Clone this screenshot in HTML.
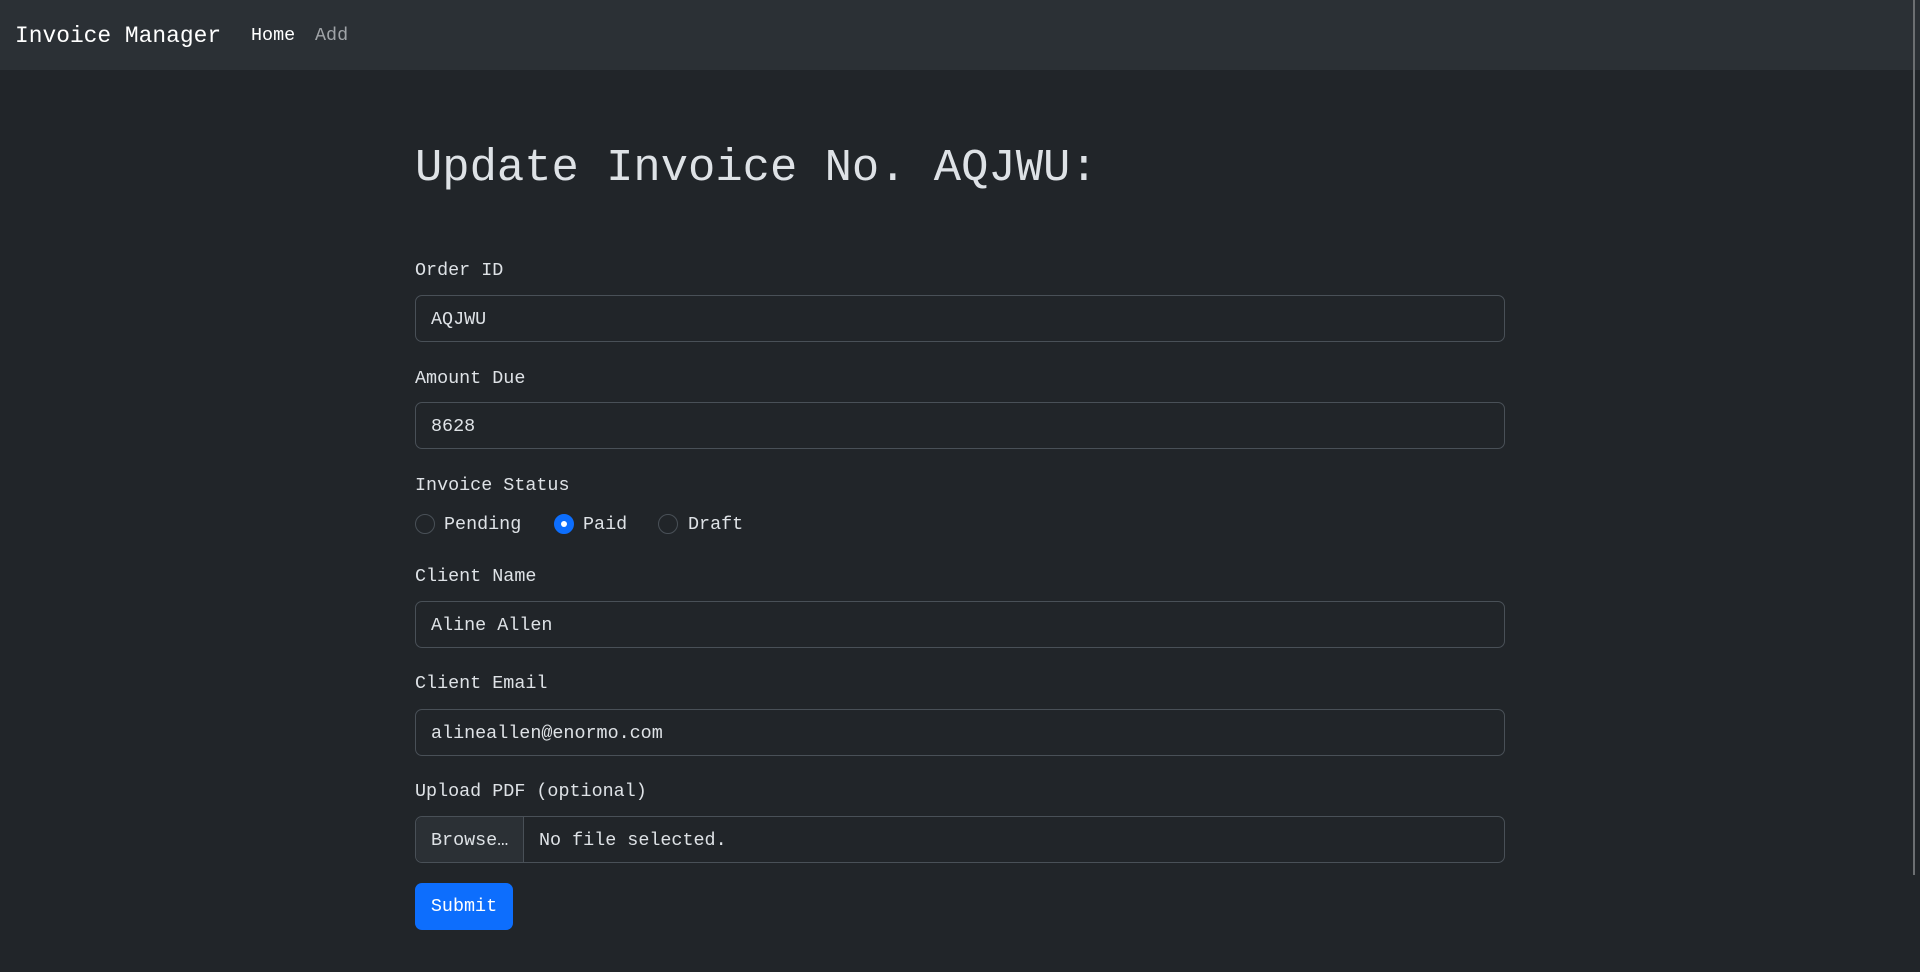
<!DOCTYPE html>
<html><head><meta charset="utf-8"><style>
*{box-sizing:border-box;margin:0;padding:0}
html,body{width:1920px;height:972px;overflow:hidden;background:#212529;color:#dee2e6;font-family:"Liberation Mono",monospace;font-size:18.4px}
nav{position:absolute;left:0;top:0;width:1920px;height:70px;background:#2b3035}
.brand{position:absolute;left:15px;top:21px;font-size:22.9px;color:#fff;line-height:30px}
.nl{position:absolute;top:23px;line-height:26px;font-size:18.4px}
.sb{position:absolute;left:1913px;top:0;width:2px;height:875px;background:#6c6f72}
h1{position:absolute;left:415px;top:140px;font-size:45.5px;font-weight:normal;line-height:56px;color:#dee2e6}
.lbl{position:absolute;left:415px;line-height:24px}
.inp{position:absolute;left:415px;width:1090px;height:47px;border:1px solid #495057;border-radius:7px;background:#212529;padding-left:15px;line-height:47px}
.r{position:absolute;top:514px;width:20px;height:20px;border-radius:50%;border:1px solid #495057;background:#212529}
.r.on{background:#0d6efd;border-color:#0d6efd}
.r.on::after{content:"";position:absolute;left:6px;top:6px;width:6px;height:6px;border-radius:50%;background:#fff}
.rt{position:absolute;top:513px;line-height:24px}
.br{position:absolute;left:0;top:0;width:108px;height:45px;background:#2b3035;border-right:1px solid #495057;border-radius:7px 0 0 7px;padding-left:15px}
.btn{position:absolute;left:415px;top:883px;width:98px;height:47px;background:#0d6efd;border-radius:7px;color:#fff;line-height:48px;text-align:center}
</style></head><body>
<nav><div class="brand">Invoice Manager</div><div class="nl" style="left:251px;color:#fff">Home</div><div class="nl" style="left:315px;color:#a0a4a8">Add</div></nav>
<div class="sb"></div>
<h1>Update Invoice No. AQJWU:</h1>
<div class="lbl" style="top:259px">Order ID</div>
<div class="inp" style="top:295px">AQJWU</div>
<div class="lbl" style="top:367px">Amount Due</div>
<div class="inp" style="top:402px">8628</div>
<div class="lbl" style="top:474px">Invoice Status</div>
<div class="r" style="left:415px"></div><div class="rt" style="left:444px">Pending</div>
<div class="r on" style="left:554px"></div><div class="rt" style="left:583px">Paid</div>
<div class="r" style="left:658px"></div><div class="rt" style="left:688px">Draft</div>
<div class="lbl" style="top:565px">Client Name</div>
<div class="inp" style="top:601px">Aline Allen</div>
<div class="lbl" style="top:672px">Client Email</div>
<div class="inp" style="top:709px">alineallen@enormo.com</div>
<div class="lbl" style="top:780px">Upload PDF (optional)</div>
<div class="inp" style="top:816px;padding-left:123px"><div class="br">Browse…</div>No file selected.</div>
<div class="btn">Submit</div>
</body></html>
